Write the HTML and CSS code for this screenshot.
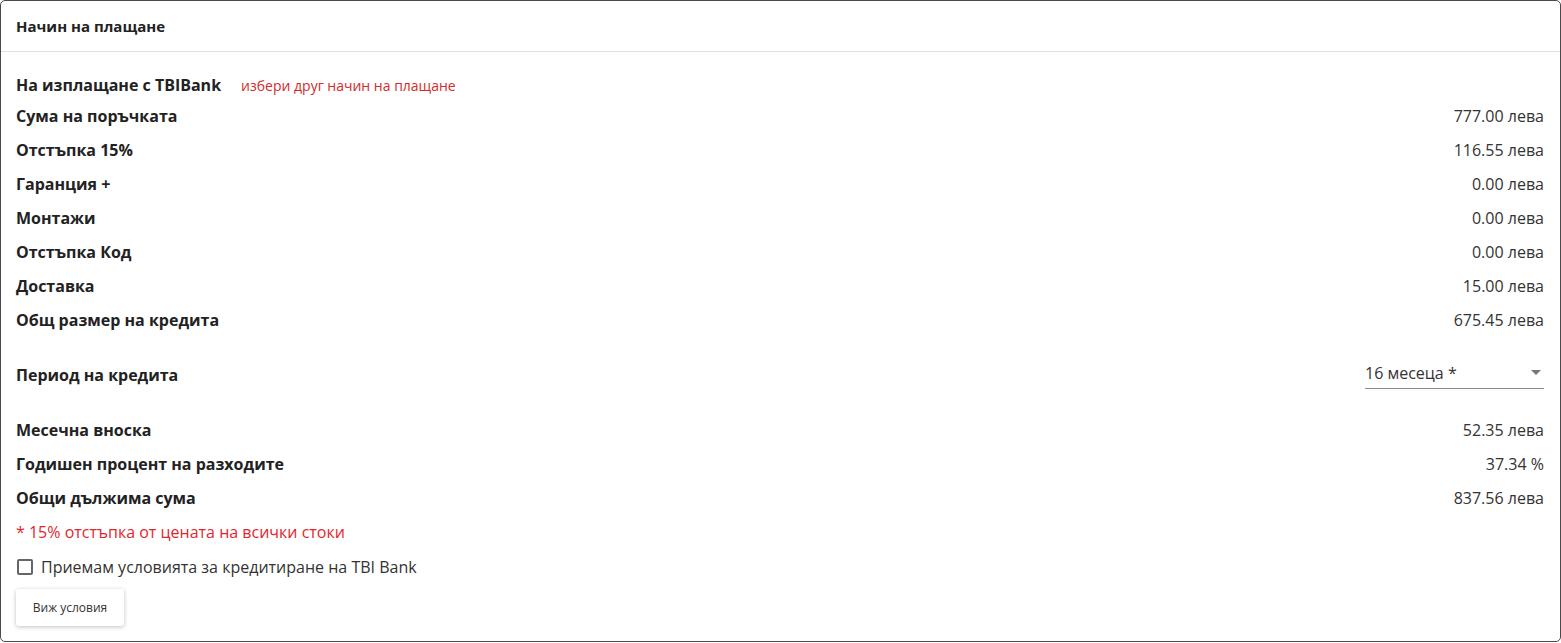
FILE: index.html
```html
<!DOCTYPE html>
<html lang="bg">
<head>
  <meta charset="UTF-8" />
  <meta name="viewport" content="width=device-width, initial-scale=1" />
  <title>Начин на плащане</title>
  <link rel="stylesheet" href="styles.css">
</head>
<body>
  <div class="card">
    <div class="card-header">Начин на плащане</div>
    <div class="card-body">
      <div class="row row-first">
        <span class="label">На изплащане с TBIBank</span>
        <a href="#" class="change-link">избери друг начин на плащане</a>
      </div>
      <div class="row">
        <span class="label">Сума на поръчката</span>
        <span class="value">777.00 лева</span>
      </div>
      <div class="row">
        <span class="label">Отстъпка 15%</span>
        <span class="value">116.55 лева</span>
      </div>
      <div class="row">
        <span class="label">Гаранция +</span>
        <span class="value">0.00 лева</span>
      </div>
      <div class="row">
        <span class="label">Монтажи</span>
        <span class="value">0.00 лева</span>
      </div>
      <div class="row">
        <span class="label">Отстъпка Код</span>
        <span class="value">0.00 лева</span>
      </div>
      <div class="row">
        <span class="label">Доставка</span>
        <span class="value">15.00 лева</span>
      </div>
      <div class="row">
        <span class="label">Общ размер на кредита</span>
        <span class="value">675.45 лева</span>
      </div>
      <div class="row row-period">
        <span class="label">Период на кредита</span>
        <div class="period-select">
          <span>16 месеца *</span>
          <span class="caret"></span>
        </div>
      </div>
      <div class="row">
        <span class="label">Месечна вноска</span>
        <span class="value">52.35 лева</span>
      </div>
      <div class="row">
        <span class="label">Годишен процент на разходите</span>
        <span class="value">37.34 %</span>
      </div>
      <div class="row">
        <span class="label">Общи дължима сума</span>
        <span class="value">837.56 лева</span>
      </div>
      <div class="note">* 15% отстъпка от цената на всички стоки</div>
      <label class="agree">
        <span class="box"></span>
        Приемам условията за кредитиране на TBI Bank
      </label>
      <button class="terms-btn">Виж условия</button>
    </div>
  </div>
</body>
</html>
```

FILE: styles.css
```css
body {
  margin: 0;
  font-family: 'Open Sans', sans-serif;
  color: #222;
  background: #fff;
}
.card {
  border: 1px solid #4a4a4a;
  border-radius: 5px;
  height: 642px;
  box-sizing: border-box;
}
.card-header {
  height: 50px;
  display: flex;
  align-items: center;
  padding: 0 15px;
  font-size: 15px;
  font-weight: 700;
  color: #222;
  border-bottom: 1px solid #e0e0e0;
}
.card-body {
  padding: 15px 16px 16px 15px;
}
.row {
  display: flex;
  align-items: center;
  justify-content: space-between;
  height: 34px;
}
.row-first {
  height: 32px;
  padding-top: 2px;
  margin-bottom: -2px;
  justify-content: flex-start;
}
.label {
  font-size: 16px;
  font-weight: 700;
  color: #222;
}
.value {
  font-size: 16px;
  color: #333;
}
.change-link {
  margin-left: 20px;
  font-size: 14px;
  color: #d42a2a;
  text-decoration: none;
}
.row-period {
  height: 76px;
}
.period-select {
  width: 179px;
  height: 32px;
  margin-top: -4px;
  box-sizing: border-box;
  display: flex;
  align-items: center;
  justify-content: space-between;
  border-bottom: 1px solid #8a8a8a;
  font-size: 16px;
  color: #333;
  padding-right: 3px;
}
.caret {
  width: 0;
  height: 0;
  border-left: 5px solid transparent;
  border-right: 5px solid transparent;
  border-top: 5px solid #777;
}
.note {
  height: 34px;
  display: flex;
  align-items: center;
  font-size: 16px;
  color: #e3262e;
}
.agree {
  height: 36px;
  display: flex;
  align-items: center;
  gap: 8px;
  font-size: 16px;
  color: #333;
  cursor: pointer;
}
.box {
  width: 16px;
  height: 16px;
  box-sizing: border-box;
  border: 2px solid #666;
  border-radius: 2px;
  margin-left: 1px;
}
.terms-btn {
  margin-top: 4px;
  width: 108px;
  height: 37px;
  background: #fff;
  border: none;
  border-radius: 3px;
  font-family: 'Open Sans', sans-serif;
  font-size: 12px;
  color: #333;
  box-shadow: 0 1px 4px rgba(0, 0, 0, 0.25);
  cursor: pointer;
}
```
